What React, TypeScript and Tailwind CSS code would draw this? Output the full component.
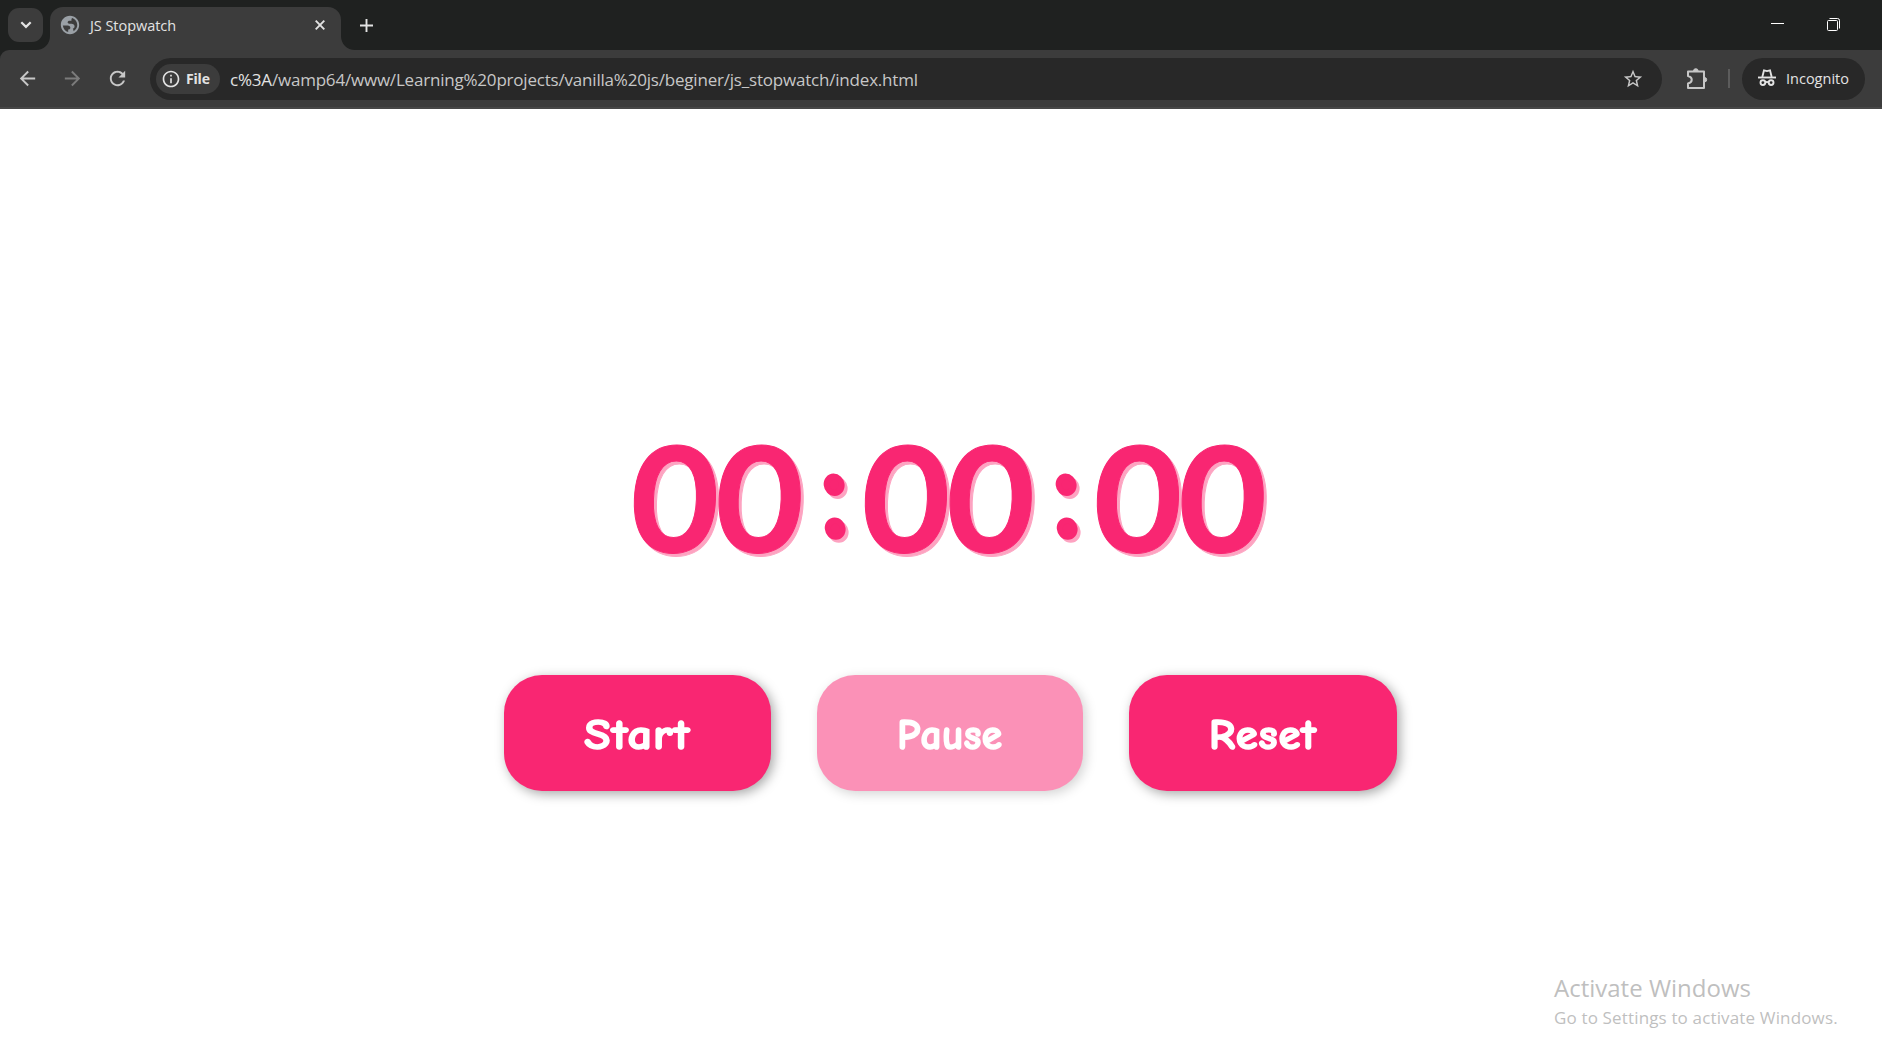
import { Fragment, type ReactNode } from "react";

function RoundButton({ label, className, labelClassName }: { label: string; className: string; labelClassName: string }) {
  return (
    <button
      className={`flex h-[116px] items-center justify-center rounded-[38px] bg-[#f92672] pt-[5px] text-white shadow-[3px_3px_12px_rgba(0,0,0,0.35)] ${className}`}
    >
      <span className={`font-['Comic_Sans_MS','Comic_Neue','Lato',cursive] text-[43px] leading-none font-bold [-webkit-text-stroke:1.6px_white] ${labelClassName}`}>
        {label}
      </span>
    </button>
  );
}

function Icon({ children, size = 24, className = "" }: { children: ReactNode; size?: number; className?: string }) {
  return (
    <svg width={size} height={size} viewBox="0 0 24 24" fill="currentColor" className={`shrink-0 ${className}`}>
      {children}
    </svg>
  );
}

function TabStrip() {
  return (
    <div className="flex h-[50px] items-start bg-[#1f2120] text-[#e3e3e3]">
      <div className="mt-2 ml-2 flex h-[34px] w-[35px] items-center justify-center rounded-[11px] bg-[#3c3c3c]">
        <svg width="12" height="8" viewBox="0 0 12 8" fill="none" stroke="currentColor" strokeWidth="2.2">
          <path d="M1.3 1.2 6 5.9l4.7-4.7" />
        </svg>
      </div>
      <svg width="14" height="14" viewBox="0 0 14 14" className="-ml-[7px] mt-9" fill="#3c3c3c">
        <path d="M14 0v14H0C8 14 14 8 14 0z" />
      </svg>
      <div className="mt-[7px] flex h-[43px] w-[291px] items-center rounded-t-[13px] bg-[#3c3c3c] pr-[16px] pb-[7px] pl-[9px]">
        <Icon size={22} className="text-[#9aa0a6]">
          <path d="M12 2C6.48 2 2 6.48 2 12s4.48 10 10 10 10-4.48 10-10S17.52 2 12 2zM4.2 12.5h5.1c2.2 0 3.1 1 3.1 2.600 0 1.300-.8 1.900-2.400 1.900v2.700C6.900 18.900 4.600 16 4.200 12.500zm11.600 6.200v-.9c0-1.100-.9-1.800-.9-1.800s2.100-.4 2.100-2.500c0-2-1.500-3-3.400-3h-2.400c-1.100 0-1.800-.6-1.800-1.500 0-1.100.9-1.700 2.200-1.700h2V5.700c0-.8.6-1.100 1.100-1.300 3.100 1.300 5.200 4.200 5.200 7.600 0 2.900-1.600 5.400-4.100 6.700z" fillRule="evenodd" />
        </Icon>
        <span className="ml-[9px] pt-[2px] font-['Open_Sans'] text-[14.5px] tracking-[-0.05px]">JS Stopwatch</span>
        <svg width="10" height="10" viewBox="0 0 10 10" className="ml-auto" fill="none" stroke="currentColor" strokeWidth="1.9">
          <path d="m.7.700 8.600 8.600m0-8.600L.7 9.300" />
        </svg>
      </div>
      <svg width="14" height="14" viewBox="0 0 14 14" className="mt-9" fill="#3c3c3c">
        <path d="M0 0v14h14C6 14 0 8 0 0z" />
      </svg>
      <svg width="13" height="13" viewBox="0 0 13 13" className="mt-[19px] ml-[5px]" stroke="currentColor" strokeWidth="1.9">
        <path d="M6.500 0v13M0 6.500h13" />
      </svg>
      <div className="ml-auto flex items-center pt-[18px] pr-[42px] text-white">
        <div className="mr-[43px] mb-[2px] h-px w-[13px] bg-white" />
        <svg width="13" height="13" viewBox="0 0 13 13" fill="none" stroke="currentColor">
          <rect x=".5" y="2.500" width="10" height="10" rx="1" />
          <path d="M2.500.500h8a2 2 0 0 1 2 2v8" />
        </svg>
      </div>
    </div>
  );
}

function Toolbar() {
  return (
    <div className="bg-[#1f2120]">
      <div className="flex h-[59px] items-center rounded-tl-[9px] border-b-2 border-[#474747] bg-[#3c3c3c] pl-[16px] text-[#c7c7c7]">
        <Icon size={23}>
          <path d="M20 11H7.830l5.590-5.590L12 4l-8 8 8 8 1.410-1.410L7.830 13H20v-2z" />
        </Icon>
        <Icon size={23} className="ml-[22px] text-[#7b7b7b]">
          <path d="m12 4-1.410 1.410L16.170 11H4v2h12.170l-5.580 5.590L12 20l8-8z" />
        </Icon>
        <Icon size={23} className="ml-[22px]">
          <path d="M17.650 6.350C16.200 4.900 14.210 4 12 4c-4.420 0-7.990 3.580-7.990 8s3.570 8 7.990 8c3.730 0 6.840-2.550 7.730-6h-2.080c-.820 2.330-3.040 4-5.650 4-3.310 0-6-2.690-6-6s2.690-6 6-6c1.660 0 3.140.690 4.220 1.780L13 11h7V4l-2.350 2.350z" />
        </Icon>
        <div className="ml-[21px] flex h-[42px] w-[1512px] items-center rounded-full bg-[#282828] pr-[18px] pl-[6px]">
          <div className="flex h-[30px] w-[64px] items-center rounded-full bg-[#3c3c3c] pl-[5px] text-[#e3e3e3]">
            <Icon size={20}>
              <path d="M11 7h2v2h-2zm0 4h2v6h-2zm1-9C6.480 2 2 6.480 2 12s4.480 10 10 10 10-4.480 10-10S17.520 2 12 2zm0 18c-4.410 0-8-3.590-8-8s3.590-8 8-8 8 3.590 8 8-3.590 8-8 8z" />
            </Icon>
            <span className="ml-[5px] font-['Open_Sans'] text-[14px] font-bold tracking-[-0.2px]">File</span>
          </div>
          <span className="ml-[10px] pt-[2px] font-['Open_Sans'] text-[17px] tracking-[-0.2px]">
            <span className="text-[#e3e3e3]">c%3A</span>
            /wamp64/www/Learning%20projects/vanilla%20js/beginer/js_stopwatch/index.html
          </span>
          <Icon size={22} className="ml-auto">
            <path d="m22 9.240-7.190-.620L12 2 9.190 8.630 2 9.240l5.460 4.730L5.820 21 12 17.270 18.180 21l-1.630-7.030L22 9.240zM12 15.400l-3.760 2.270 1-4.280-3.320-2.880 4.380-.380L12 6.100l1.710 4.040 4.380.380-3.320 2.880 1 4.280L12 15.400z" />
          </Icon>
        </div>
        <svg width="22" height="22" viewBox="0 0 22 22" className="ml-[24px]" fill="none" stroke="currentColor" strokeWidth="2" strokeLinejoin="round">
          <path d="M2 3.500h16v16.500H2v-4.500c5-1 5-6.500 0-7.500z" />
          <path d="M7.500 3a2.300 2.300 0 0 1 4.600 0zM18.500 9.500a2.200 2.200 0 0 1 0 4.400z" fill="currentColor" strokeWidth="1" />
        </svg>
        <div className="ml-[20px] h-[19px] w-[2px] bg-[#5c5c5c]" />
        <div className="ml-[12px] flex h-[42px] w-[123px] items-center rounded-full bg-[#282828] pl-[16px] text-[#e3e3e3]">
          <svg width="18" height="18" viewBox="0 0 18 18" className="mb-[2px]" fill="none" stroke="currentColor" strokeWidth="1.900">
            <path d="M0 8.500h18" />
            <path d="M4.300 8 6 1.300l3 .8 3-.8L13.700 8" />
            <circle cx="4.900" cy="13.600" r="2.400" />
            <circle cx="13.100" cy="13.600" r="2.400" />
            <path d="M7.300 13.400q1.700-1 3.400 0" />
          </svg>
          <span className="ml-[10px] font-['Open_Sans'] text-[14.5px]">Incognito</span>
        </div>
      </div>
    </div>
  );
}

export default function App() {
  const parts = ["00", "00", "00"];
  return (
    <div className="flex h-[1056px] w-[1882px] flex-col overflow-hidden bg-white">
      <TabStrip />
      <Toolbar />
      <main className="flex flex-1 flex-col items-center">
        <div className="mt-[315px] ml-[6px] flex h-[150px] items-center leading-none text-[#f92672] drop-shadow-[3px_3px_0_#fda3c1]">
          {parts.map((part, i) => (
            <Fragment key={i}>
              {i > 0 && (
                <span className="w-[60px] translate-x-[6px] -translate-y-[7px] skew-x-[6deg] text-center font-['Comic_Sans_MS','Comic_Neue','Lato',cursive] text-[135px] font-bold [-webkit-text-stroke:6px_#f92672]">
                  :
                </span>
              )}
              <span className="w-[171.500px] skew-x-[-2deg] font-['Inter'] text-[145px] font-semibold tracking-[-10.800px] [-webkit-text-stroke:1px_#f92672]">
                {part}
              </span>
            </Fragment>
          ))}
        </div>
        <div className="mt-[101px] ml-[19px] flex gap-[46px]">
          <RoundButton label="Start" className="w-[267px]" labelClassName="scale-x-[1.12] tracking-[1px]" />
          <RoundButton label="Pause" className="w-[266px] opacity-50" labelClassName="scale-x-[0.96] tracking-[0.5px]" />
          <RoundButton label="Reset" className="w-[268px]" labelClassName="scale-x-[1.04] tracking-[0.8px]" />
        </div>
        <div className="mt-auto mb-[26px] ml-auto w-[328px] font-['Open_Sans'] text-[#bfbfbf]">
          <div className="pb-[2px] text-[24px] leading-[32px]">Activate Windows</div>
          <div className="text-[17px] leading-[24px] tracking-[0.15px]">Go to Settings to activate Windows.</div>
        </div>
      </main>
    </div>
  );
}
